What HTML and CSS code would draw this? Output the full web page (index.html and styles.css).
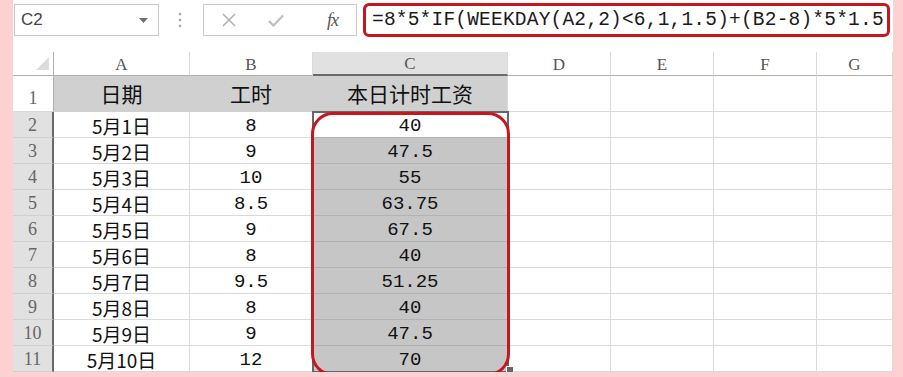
FILE: index.html
```html
<!DOCTYPE html>
<html lang="zh">

<head>
    <meta charset="UTF-8">
    <title>本日计时工资</title>
    <link rel="stylesheet" href="styles.css">
</head>

<body>
    <div class="page">
        <div class="bar">
            <div class="namebox">
                <span>C2</span>
                <svg class="drop" width="9" height="5" viewBox="0 0 9 5"><path d="M0 0H9L4.5 5Z" fill="#6f6f6f"/></svg>
            </div>
            <div class="dots">
                <svg width="4" height="16" viewBox="0 0 4 16">
                    <circle cx="2" cy="2" r="1.3" fill="#a8a8a8"/>
                    <circle cx="2" cy="8" r="1.3" fill="#a8a8a8"/>
                    <circle cx="2" cy="14" r="1.3" fill="#a8a8a8"/>
                </svg>
            </div>
            <div class="btns">
                <svg class="knap" width="14" height="14" viewBox="0 0 14 14"><path d="M1 1L13 13M13 1L1 13" stroke="#b4b4b4" stroke-width="1.6"/></svg>
                <svg class="knap" width="16" height="13" viewBox="0 0 16 13"><path d="M1 7L5.5 11.5L15 1.5" fill="none" stroke="#bdbdbd" stroke-width="2.2"/></svg>
                <span class="fx">fx</span>
            </div>
            <div class="formula">=8*5*IF(WEEKDAY(A2,2)&lt;6,1,1.5)+(B2-8)*5*1.5</div>
        </div>

        <div class="sheet">
            <div class="grid" id="grid">
                <div class="cell corner"><span class="tri"></span></div>
                <div class="cell colh">A</div>
                <div class="cell colh">B</div>
                <div class="cell colh on">C</div>
                <div class="cell colh">D</div>
                <div class="cell colh">E</div>
                <div class="cell colh">F</div>
                <div class="cell colh">G</div>

                <div class="cell rowh first">1</div>
                <div class="cell titel">日期</div>
                <div class="cell titel">工时</div>
                <div class="cell titel">本日计时工资</div>
                <div class="cell"></div>
                <div class="cell"></div>
                <div class="cell"></div>
                <div class="cell"></div>
            </div>
            <div class="valg"></div>
            <div class="handle"></div>
            <div class="ring"></div>
        </div>
    </div>

    <template>
        <div class="cell rowh on"></div>
        <div class="cell data dato"></div>
        <div class="cell data tal timer"></div>
        <div class="cell data tal loen"></div>
        <div class="cell"></div>
        <div class="cell"></div>
        <div class="cell"></div>
        <div class="cell"></div>
    </template>

    <script>
        const grid = document.querySelector("#grid");
        const temp = document.querySelector("template");

        const timer = ["8", "9", "10", "8.5", "9", "8", "9.5", "8", "9", "12"];
        const loen = ["40", "47.5", "55", "63.75", "67.5", "40", "51.25", "40", "47.5", "70"];

        timer.forEach((t, i) => {
            let klon = temp.cloneNode(true).content;
            klon.querySelector(".rowh").textContent = i + 2;
            klon.querySelector(".dato").textContent = "5月" + (i + 1) + "日";
            klon.querySelector(".timer").textContent = t;
            klon.querySelector(".loen").textContent = loen[i];
            if (i == 0) {
                klon.querySelector(".loen").classList.add("aktiv");
            }
            grid.appendChild(klon);
        });
    </script>
</body>

</html>
```

FILE: styles.css
```css
body {
    margin: 0;
    background-color: #fdd0d1;
}

.page {
    margin-left: 13px;
    width: 880px;
    height: 372px;
    background-color: #fff;
    position: relative;
}

/* formel-linjen */
.bar {
    height: 40px;
    display: flex;
    align-items: center;
}

.namebox {
    box-sizing: border-box;
    margin-left: 1px;
    width: 145px;
    height: 32px;
    border: 1px solid #c9c9c9;
    display: flex;
    align-items: center;
    justify-content: space-between;
    padding: 0 10px 0 6px;
    font-family: "Liberation Sans", sans-serif;
    font-size: 17px;
    color: #444;
}

.dots {
    width: 42px;
    display: flex;
    justify-content: center;
}

.btns {
    box-sizing: border-box;
    margin-left: 2px;
    width: 154px;
    height: 32px;
    border: 1px solid #c9c9c9;
    display: flex;
    align-items: center;
    padding-left: 18px;
}

.knap + .knap {
    margin-left: 32px;
}

.fx {
    margin-left: 43px;
    font-family: "Liberation Serif", serif;
    font-style: italic;
    font-size: 18px;
    color: #555;
    letter-spacing: -1px;
}

.formula {
    box-sizing: border-box;
    margin-left: 6px;
    width: 527px;
    height: 34px;
    border: 3px solid #c8161e;
    border-radius: 6px;
    padding-left: 6px;
    display: flex;
    align-items: center;
    font-family: "Liberation Mono", monospace;
    font-size: 19.5px;
    letter-spacing: 0.2px;
    color: #1a1a1a;
    white-space: nowrap;
}

/* regnearket */
.sheet {
    margin-top: 12px;
    position: relative;
}

.grid {
    display: grid;
    grid-template-columns: 41px 136px 123px 195px 103px 103px 103px 76px;
    grid-template-rows: 24px 36px repeat(10, 26px);
    height: 320px;
    overflow: hidden;
}

.cell {
    box-sizing: border-box;
    border-right: 1px solid #dadada;
    border-bottom: 1px solid #dadada;
    display: flex;
    align-items: center;
    justify-content: center;
    font-family: "Noto Sans CJK SC", sans-serif;
    font-size: 19px;
    line-height: 1.1;
    color: #111;
    white-space: nowrap;
}

.corner {
    position: relative;
    border-bottom-color: #b0b0b0;
    border-right-color: #b0b0b0;
}

.tri {
    position: absolute;
    right: 4px;
    bottom: 5px;
    width: 0;
    height: 0;
    border-left: 13px solid transparent;
    border-bottom: 13px solid #dcdcdc;
}

.colh {
    font-family: "Liberation Serif", serif;
    font-size: 17px;
    color: #555;
    border-bottom-color: #b0b0b0;
    padding-top: 3px;
}

.colh.on {
    background-color: #e1e1e1;
    border-bottom: 2px solid #6a6a6a;
}

.rowh {
    font-family: "Liberation Serif", serif;
    font-size: 18px;
    color: #666;
    border-right-color: #b0b0b0;
}

.rowh.first {
    align-items: flex-end;
    padding-bottom: 2px;
}

.rowh.on {
    background-color: #e1e1e1;
    border-right: 2px solid #6a6a6a;
    border-bottom-color: #cfcfcf;
    padding-top: 3px;
}

.data {
    padding-top: 3px;
}

.titel {
    background-color: #d0d0d0;
    border-right-color: #d0d0d0;
    border-bottom-color: #d0d0d0;
    font-size: 21px;
}

.titel:nth-child(12) {
    border-right-color: #dadada;
}

.tal {
    font-family: "Liberation Mono", monospace;
    font-size: 19px;
}

.loen {
    background-color: #c6c6c6;
    border-bottom-color: #b2b2b2;
}

.loen.aktiv {
    background-color: #fff;
}

/* markering og ring */
.valg {
    position: absolute;
    left: 299px;
    top: 59px;
    width: 197px;
    height: 262px;
    box-sizing: border-box;
    border: 2px solid #666;
}

.handle {
    position: absolute;
    left: 493px;
    top: 314px;
    width: 6px;
    height: 6px;
    background-color: #666;
    border: 1px solid #fff;
}

.ring {
    position: absolute;
    left: 298px;
    top: 60px;
    width: 199px;
    height: 264px;
    box-sizing: border-box;
    border: 3px solid #c8161e;
    border-radius: 22px;
}
```
